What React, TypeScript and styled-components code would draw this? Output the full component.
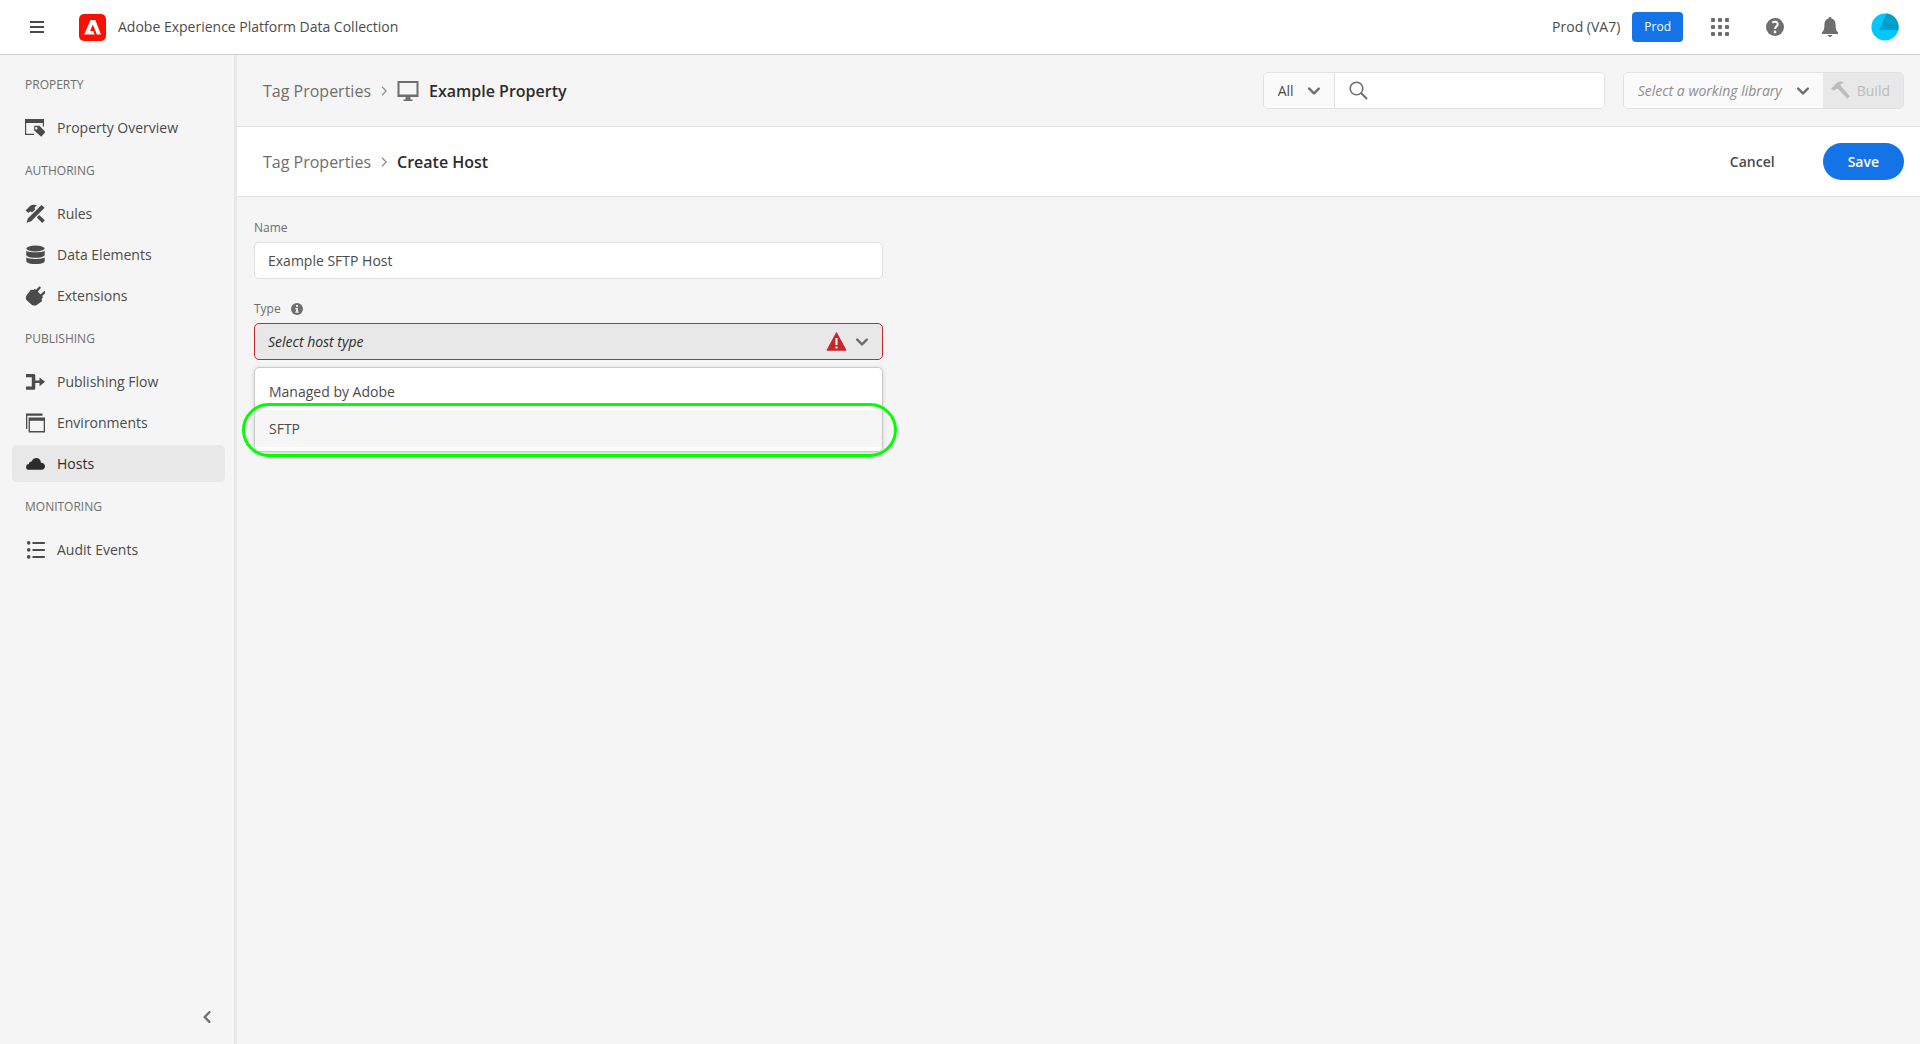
import React from "react";
import styled, { createGlobalStyle } from "styled-components";

const color = {
  page: "#f5f5f5",
  surface: "#ffffff",
  field: "#fafafa",
  line: "#e1e1e1",
  selected: "#e8e8e8",
  text: "#4b4b4b",
  strong: "#2c2c2c",
  muted: "#6e6e6e",
  placeholder: "#8e8e8e",
  disabled: "#bcbcbc",
  accent: "#1473e6",
  error: "#c9252d",
};

const GlobalStyle = createGlobalStyle`
  *, *::before, *::after { box-sizing: border-box; }
  body { margin: 0; background: ${color.page}; }
  body, button, input, select {
    font-family: "Open Sans", "Noto Sans", sans-serif;
    font-size: 14px;
    line-height: 20px;
    color: ${color.text};
  }
  svg { display: block; flex: none; }
`;

/* ---------- Shell ---------- */

const Shell = styled.div`
  display: flex;
  flex-direction: column;
  min-height: 100vh;
`;

const Header = styled.header`
  display: flex;
  align-items: center;
  height: 55px;
  padding: 0 21px 0 23px;
  background: ${color.surface};
  border-bottom: 1px solid #cfcfcf;
`;

const IconButton = styled.button`
  display: flex;
  align-items: center;
  justify-content: center;
  width: 28px;
  height: 28px;
  padding: 0;
  border: 0;
  background: none;
  color: ${color.muted};
  cursor: pointer;
`;

const MenuButton = styled(IconButton)`
  color: ${color.text};
  margin-right: 28px;
`;

const Brand = styled.a`
  display: flex;
  align-items: center;
  gap: 12px;
  color: ${color.text};
  text-decoration: none;
`;

const HeaderTools = styled.div`
  display: flex;
  align-items: center;
  gap: 23px;
  margin-left: auto;
`;

const Sandbox = styled.div`
  display: flex;
  align-items: center;
  gap: 12px;
`;

const IconGroup = styled.div`
  display: flex;
  gap: 27px;
`;

const SandboxButton = styled.button`
  height: 30px;
  padding: 0 12px;
  border: 0;
  border-radius: 4px;
  background: ${color.accent};
  color: #fff;
  font-size: 12px;
  cursor: pointer;
`;

const Body = styled.div`
  display: flex;
  flex: 1;
`;

/* ---------- Side navigation ---------- */

const Sidebar = styled.aside`
  display: flex;
  flex-direction: column;
  justify-content: space-between;
  flex: none;
  width: 237px;
  padding: 5px 9px 13px 12px;
  border-right: 3px solid ${color.selected};
`;

const NavHeading = styled.h2`
  margin: 0;
  padding: 15px 13px 14px;
  font-size: 12px;
  line-height: 20px;
  font-weight: 400;
  color: ${color.muted};
  text-transform: uppercase;
`;

const NavList = styled.ul`
  display: grid;
  gap: 4px;
  margin: 0;
  padding: 0;
  list-style: none;
`;

const NavLink = styled.a<{ $current?: boolean }>`
  display: flex;
  align-items: center;
  gap: 12px;
  height: 37px;
  padding: 0 13px;
  border-radius: 5px;
  background: ${(p) => (p.$current ? color.selected : "transparent")};
  color: ${(p) => (p.$current ? color.strong : color.text)};
  text-decoration: none;
`;

const CollapseButton = styled(IconButton)`
  align-self: flex-end;
  margin-right: 4px;
`;

/* ---------- Main column ---------- */

const Main = styled.main`
  flex: 1;
  min-width: 0;
`;

const Bar = styled.div<{ $white?: boolean }>`
  display: flex;
  align-items: center;
  justify-content: space-between;
  height: ${(p) => (p.$white ? "70px" : "72px")};
  padding: 0 16px 0 26px;
  border-bottom: 1px solid ${color.line};
  background: ${(p) => (p.$white ? color.surface : color.page)};
`;

const Crumbs = styled.nav`
  display: flex;
  align-items: center;
  gap: 10px;
  font-size: 16px;
  line-height: 24px;
  svg { color: ${color.placeholder}; }
`;

const CrumbLink = styled.a`
  color: ${color.muted};
  text-decoration: none;
`;

const CrumbTitle = styled.h1`
  display: flex;
  align-items: center;
  gap: 10px;
  margin: 0;
  font-size: 16px;
  line-height: 24px;
  font-weight: 600;
  color: ${color.strong};
  svg { color: ${color.muted}; }
`;

const Tools = styled.div`
  display: flex;
  align-items: center;
  gap: 18px;
`;

const Joined = styled.div`
  display: flex;
  height: 37px;
  border: 1px solid ${color.line};
  border-radius: 5px;
  overflow: hidden;
`;

const SelectBox = styled.div<{ $divided?: boolean }>`
  display: grid;
  align-items: center;
  background: ${color.field};
  border-right: ${(p) => (p.$divided ? `1px solid ${color.line}` : "0")};
  > * { grid-area: 1 / 1; }
  > svg {
    justify-self: end;
    margin-right: 14px;
    color: ${color.muted};
    pointer-events: none;
  }
`;

const BarSelect = styled.select<{ $empty?: boolean }>`
  appearance: none;
  height: 100%;
  padding: 0 40px 0 14px;
  border: 0;
  background: transparent;
  font-style: ${(p) => (p.$empty ? "italic" : "normal")};
  color: ${(p) => (p.$empty ? color.placeholder : color.text)};
`;

const SearchBox = styled.label`
  display: flex;
  align-items: center;
  gap: 8px;
  width: 269px;
  padding-left: 14px;
  background: ${color.surface};
  color: ${color.muted};
`;

const SearchInput = styled.input`
  flex: 1;
  min-width: 0;
  height: 100%;
  padding: 0 8px 0 0;
  border: 0;
  background: transparent;
  outline: none;
`;

const BuildButton = styled.button`
  display: flex;
  align-items: center;
  gap: 7px;
  padding: 0 13px 0 8px;
  border: 0;
  background: ${color.selected};
  color: ${color.disabled};
`;

const Actions = styled.div`
  display: flex;
  align-items: center;
  gap: 32px;
`;

const ActionButton = styled.button<{ $primary?: boolean }>`
  height: 37px;
  padding: 0 ${(p) => (p.$primary ? "25px" : "16px")};
  border: 0;
  border-radius: 19px;
  background: ${(p) => (p.$primary ? color.accent : "transparent")};
  color: ${(p) => (p.$primary ? "#fff" : color.text)};
  font-weight: 600;
  cursor: pointer;
`;

/* ---------- Form ---------- */

const Form = styled.form`
  display: grid;
  gap: 20px;
  max-width: 646px;
  padding: 21px 0 0 17px;
`;

const Field = styled.div`
  position: relative;
  display: grid;
  gap: 4px;
`;

const LabelRow = styled.div`
  display: flex;
  align-items: center;
  gap: 10px;
  color: ${color.muted};
`;

const Label = styled.label`
  font-size: 12px;
  line-height: 20px;
`;

const TextInput = styled.input`
  width: 100%;
  height: 37px;
  padding: 0 13px;
  border: 1px solid ${color.line};
  border-radius: 5px;
  background: ${color.surface};
`;

const HostSelectBox = styled.div`
  display: grid;
  align-items: center;
  > * { grid-area: 1 / 1; }
`;

const HostSelect = styled.select`
  appearance: none;
  width: 100%;
  height: 37px;
  padding: 0 72px 0 13px;
  border: 1px solid ${color.error};
  border-radius: 5px;
  background: ${color.selected};
  color: ${color.strong};
  font-style: italic;
`;

const SelectMarks = styled.span`
  display: flex;
  align-items: center;
  gap: 9px;
  justify-self: end;
  padding-right: 15px;
  color: ${color.muted};
  pointer-events: none;
`;

const Popover = styled.div`
  position: absolute;
  top: calc(100% + 7px);
  left: 0;
  right: 0;
`;

const Options = styled.ul`
  margin: 0;
  padding: 5px 0 4px;
  list-style: none;
  border: 1px solid #cacaca;
  border-radius: 5px;
  background: ${color.surface};
  box-shadow: 0 1px 4px rgba(0, 0, 0, 0.15);
`;

const Option = styled.li<{ $active?: boolean }>`
  padding: 9px 14px 8px;
  background: ${(p) => (p.$active ? "#f6f6f6" : "transparent")};
`;

const Highlight = styled.div`
  position: absolute;
  left: -12px;
  right: -14px;
  bottom: -5px;
  height: 54px;
  border: 3px solid #00ff00;
  border-radius: 27px;
  pointer-events: none;
`;

/* ---------- Icons ---------- */

const NavIcon = ({ children }: { children: React.ReactNode }) => (
  <svg width="20" height="20" viewBox="0 0 20 20" fill="currentColor" aria-hidden="true">
    {children}
  </svg>
);

const OverviewIcon = () => (
  <NavIcon>
    <path d="M0 1h19v7.500h-1.200V5H1.200v10.800H9V17H0z" />
    <path d="M9.200 7.800h5.200l6 6.200-4.200 4.800-7-6.400zM11.300 9a1.200 1.200 0 1 0 0 2.400 1.200 1.200 0 0 0 0-2.400z" fillRule="evenodd" />
  </NavIcon>
);
const RulesIcon = () => (
  <NavIcon>
    <path d="M16.500.900 19.600 3.800 6.200 17.200 1.600 18.800 3 14.200z" />
    <path d="M.6 6.600 5 1.900C7.300.2 10.200.3 12.400 1.800 10.800 2.200 9.800 2.900 9.500 4l.8 1.300-3.300 3.300L5.300 7.200 3.400 8.900z" />
    <path d="m11.800 13.400 2.400-2.400 5.600 5.300-2.600 2.700z" />
  </NavIcon>
);
const DataIcon = () => (
  <NavIcon>
    <ellipse cx="10.500" cy="3.500" rx="9.200" ry="2.900" />
    <path d="M1.300 5.800c2 2 16.400 2 18.400 0v4.400c-1.200 3.400-17.200 3.400-18.400 0z" />
    <path d="M1.300 12.200c2 2.300 16.400 2.300 18.400 0v4c-1.200 3.800-17.200 3.800-18.400 0z" />
  </NavIcon>
);
const ExtensionsIcon = () => (
  <NavIcon>
    <path d="M5.800 3.800 8.500 4l1.500-1.200 8 8.200-1.200 1.700.1 2.600-4.800 3.400c-1.400 1.100-3.800 1.300-5.400 0L1.700 14.300C.5 12.900.6 10.300 1.800 8.900z" />
    <path d="m11 5.700 3.500-4M15.500 10l3.900-3.700" stroke="currentColor" strokeWidth="2.400" strokeLinecap="round" />
  </NavIcon>
);
const FlowIcon = () => (
  <NavIcon>
    <path d="M1 2h7.800a1.500 1.500 0 0 1 1.500 1.500v5.100h4.200V5.400l5.500 4.400-5.500 4.400v-3.100h-4.200v5.200a1.500 1.500 0 0 1-1.500 1.500H1v-3.300h5.800V5.300H1z" />
  </NavIcon>
);
const EnvironmentsIcon = () => (
  <NavIcon>
    <path d="M1 .500h16.500v2.300H2.300v13.200H1z" />
    <path d="M3.600 4.600H20v14.800H3.600zM4.900 7.700v10.400h13.800V7.700z" fillRule="evenodd" />
  </NavIcon>
);
const HostsIcon = () => (
  <NavIcon>
    <path d="M4 15.800a2.900 2.900 0 0 1-2.900-2.900c0-1.600 1.300-2.700 2.800-2.800 0-1.700 1.300-2.700 2.800-2.500C7.400 5.400 9.100 4 11.200 4c2.700 0 4.700 2 4.700 4.700 2.300-.1 4.100 1.500 4.100 3.600 0 2-1.500 3.500-3.400 3.500z" />
  </NavIcon>
);
const AuditIcon = () => (
  <NavIcon>
    <circle cx="3.700" cy="2.900" r="1.800" />
    <circle cx="3.700" cy="9.900" r="1.800" />
    <circle cx="3.700" cy="16.900" r="1.800" />
    <path d="M7.500 2h12.300v2H7.500zM7.500 9h12.300v2H7.500zM7.500 16h12.300v2H7.500z" />
  </NavIcon>
);

const ChevronDown = () => (
  <svg width="12" height="8" viewBox="0 0 10 6" fill="currentColor" aria-hidden="true">
    <path d="M9.990 1.010A1 1 0 0 0 8.283.303L5 3.586 1.717.303A1 1 0 1 0 .303 1.717l3.990 3.980a1 1 0 0 0 1.414 0l3.990-3.980a.997.997 0 0 0 .293-.707z" />
  </svg>
);
const ChevronLeft = () => (
  <svg width="8" height="12" viewBox="0 0 6 10" fill="currentColor" aria-hidden="true">
    <path d="M4.990 10.010a1 1 0 0 0 .707-1.707L2.414 5.020l3.283-3.283A1 1 0 1 0 4.283.323L.303 4.313a1 1 0 0 0 0 1.414l3.980 3.990a.997.997 0 0 0 .707.293z" />
  </svg>
);
const Separator = () => (
  <svg width="6" height="10" viewBox="0 0 6 10" fill="none" stroke="currentColor" strokeWidth="1.300" aria-hidden="true">
    <path d="m1 .8 4.200 4.200L1 9.200" />
  </svg>
);
const MonitorIcon = () => (
  <svg width="22" height="20" viewBox="0 0 22 20" fill="currentColor" aria-hidden="true">
    <path d="M.5 0h21v16H.5zM2.500 2v11.500h17V2z" fillRule="evenodd" />
    <path d="M8.500 16h5v2.400h2V20h-9v-1.600h2z" />
  </svg>
);
const SearchIcon = () => (
  <svg width="19" height="19" viewBox="0 0 19 19" fill="none" stroke="currentColor" aria-hidden="true">
    <circle cx="7.500" cy="7.500" r="6.300" strokeWidth="1.600" />
    <path d="m12 12 6 6" strokeWidth="2" />
  </svg>
);
const HammerIcon = () => (
  <svg width="19" height="19" viewBox="0 0 19 19" fill="currentColor" aria-hidden="true">
    <path d="M.3 7.400 6.200 1.600C8.400.2 11 .3 13 1.900 11.400 1.900 10 2.600 9.300 4l1 1.600 8.400 9.600-2.100 2.500-9-9.300L5.900 7.400 2.800 9.800z" />
  </svg>
);
const InfoIcon = () => (
  <svg width="12" height="12" viewBox="0 0 12 12" aria-hidden="true">
    <circle cx="6" cy="6" r="6" fill="currentColor" />
    <path d="M5 2h2v1.700H5zM4.300 5h2.600v3.600h.8v1.200H4.300V8.600h.8V6.200h-.8z" fill="#f4f4f4" />
  </svg>
);
const AlertIcon = () => (
  <svg width="21" height="19" viewBox="0 0 21 19" aria-hidden="true">
    <path d="M10.060.600.600 18a.5.500 0 0 0 .440.740h18.920a.5.500 0 0 0 .440-.740L10.940.600a.5.500 0 0 0-.880 0z" fill="#c9252d" />
    <path d="M9.500 6h2v7h-2zM9.500 14.500h2v2h-2z" fill="#fff" />
  </svg>
);
const HamburgerIcon = () => (
  <svg width="14" height="12" viewBox="0 0 14 12" fill="currentColor" aria-hidden="true">
    <path d="M0 0h14v2H0zM0 5h14v2H0zM0 10h14v2H0z" />
  </svg>
);
const AdobeLogo = () => (
  <svg width="27" height="27" viewBox="0 0 27 27" aria-hidden="true">
    <rect width="27" height="27" rx="5" fill="#fa0f00" />
    <path d="M15.600 20.500 14.300 17h-3.200l2.700-6.400 4.100 9.900h4L16.400 6h-4.900L5.200 20.500z" fill="#fff" />
  </svg>
);
const AppsIcon = () => (
  <svg width="18" height="18" viewBox="0 0 18 18" fill="currentColor" aria-hidden="true">
    {[0, 7, 14].flatMap((y) => [0, 7, 14].map((x) => <rect key={`${x}-${y}`} x={x} y={y} width="4" height="4" rx="1" />))}
  </svg>
);
const HelpIcon = () => (
  <svg width="18" height="18" viewBox="0 0 18 18" aria-hidden="true">
    <circle cx="9" cy="9" r="9" fill="currentColor" />
    <path d="M6.300 4.800C8.300 3 11.700 3.500 11.700 6.300c0 2.200-2.600 2.400-2.600 4.600" fill="none" stroke="#fff" strokeWidth="2" />
    <circle cx="9" cy="14" r="1.400" fill="#fff" />
  </svg>
);
const BellIcon = () => (
  <svg width="18" height="20" viewBox="0 0 18 20" fill="currentColor" aria-hidden="true">
    <path d="M9 0a1.500 1.500 0 0 1 1.500 1.600C13.400 2.300 14.600 4.700 14.600 8c0 4 .5 5.700 2.400 7.200V17H1v-1.800C2.900 13.700 3.400 12 3.400 8c0-3.300 1.200-5.700 4.100-6.400A1.500 1.500 0 0 1 9 0zM6.600 18h4.800c-.3 1.100-1.200 1.900-2.400 1.900S6.900 19.100 6.600 18z" />
  </svg>
);
const Avatar = () => (
  <svg width="28" height="28" viewBox="0 0 28 28" aria-hidden="true">
    <circle cx="14" cy="14" r="13.600" fill="#00c8ff" />
    <path d="M15.300.500A13.600 13.600 0 0 1 27 18l-2-1H8.500z" fill="#009fcb" />
  </svg>
);

/* ---------- Page ---------- */

const sections = [
  { title: "Property", items: [{ name: "Property Overview", Icon: OverviewIcon }] },
  {
    title: "Authoring",
    items: [
      { name: "Rules", Icon: RulesIcon },
      { name: "Data Elements", Icon: DataIcon },
      { name: "Extensions", Icon: ExtensionsIcon },
    ],
  },
  {
    title: "Publishing",
    items: [
      { name: "Publishing Flow", Icon: FlowIcon },
      { name: "Environments", Icon: EnvironmentsIcon },
      { name: "Hosts", Icon: HostsIcon },
    ],
  },
  { title: "Monitoring", items: [{ name: "Audit Events", Icon: AuditIcon }] },
];

export default function App() {
  const current = "Hosts";
  const [name, setName] = React.useState("Example SFTP Host");

  return (
    <Shell>
      <GlobalStyle />
      <Header>
        <MenuButton aria-label="Menu"><HamburgerIcon /></MenuButton>
        <Brand href="#"><AdobeLogo />Adobe Experience Platform Data Collection</Brand>
        <HeaderTools>
          <Sandbox>
            <span>Prod (VA7)</span>
            <SandboxButton>Prod</SandboxButton>
          </Sandbox>
          <IconGroup>
            <IconButton aria-label="Apps"><AppsIcon /></IconButton>
            <IconButton aria-label="Help"><HelpIcon /></IconButton>
            <IconButton aria-label="Notifications"><BellIcon /></IconButton>
            <IconButton aria-label="Account"><Avatar /></IconButton>
          </IconGroup>
        </HeaderTools>
      </Header>

      <Body>
        <Sidebar>
          <nav aria-label="Property">
            {sections.map((section) => (
              <section key={section.title}>
                <NavHeading>{section.title}</NavHeading>
                <NavList>
                  {section.items.map(({ name: item, Icon }) => (
                    <li key={item}>
                      <NavLink href="#" $current={item === current} aria-current={item === current ? "page" : undefined}>
                        <Icon />
                        {item}
                      </NavLink>
                    </li>
                  ))}
                </NavList>
              </section>
            ))}
          </nav>
          <CollapseButton aria-label="Collapse navigation"><ChevronLeft /></CollapseButton>
        </Sidebar>

        <Main>
          <Bar>
            <Crumbs aria-label="Property breadcrumb">
              <CrumbLink href="#">Tag Properties</CrumbLink>
              <Separator />
              <CrumbTitle><MonitorIcon />Example Property</CrumbTitle>
            </Crumbs>
            <Tools>
              <Joined>
                <SelectBox $divided>
                  <BarSelect aria-label="Search scope" defaultValue="All">
                    <option>All</option>
                  </BarSelect>
                  <ChevronDown />
                </SelectBox>
                <SearchBox>
                  <SearchIcon />
                  <SearchInput type="text" aria-label="Search" />
                </SearchBox>
              </Joined>
              <Joined>
                <SelectBox>
                  <BarSelect $empty aria-label="Working library">
                    <option>Select a working library</option>
                  </BarSelect>
                  <ChevronDown />
                </SelectBox>
                <BuildButton disabled><HammerIcon />Build</BuildButton>
              </Joined>
            </Tools>
          </Bar>

          <Bar $white>
            <Crumbs aria-label="Page breadcrumb">
              <CrumbLink href="#">Tag Properties</CrumbLink>
              <Separator />
              <CrumbTitle>Create Host</CrumbTitle>
            </Crumbs>
            <Actions>
              <ActionButton type="button">Cancel</ActionButton>
              <ActionButton type="submit" form="host-form" $primary>Save</ActionButton>
            </Actions>
          </Bar>

          <Form id="host-form" onSubmit={(e) => e.preventDefault()}>
            <Field>
              <LabelRow><Label htmlFor="host-name">Name</Label></LabelRow>
              <TextInput id="host-name" type="text" value={name} onChange={(e) => setName(e.target.value)} />
            </Field>
            <Field>
              <LabelRow>
                <Label htmlFor="host-type">Type</Label>
                <InfoIcon />
              </LabelRow>
              <HostSelectBox>
                <HostSelect id="host-type" aria-invalid="true">
                  <option>Select host type</option>
                </HostSelect>
                <SelectMarks><AlertIcon /><ChevronDown /></SelectMarks>
              </HostSelectBox>
              <Popover>
                <Options role="listbox" aria-label="Type">
                  <Option role="option">Managed by Adobe</Option>
                  <Option role="option" $active>SFTP</Option>
                </Options>
                <Highlight />
              </Popover>
            </Field>
          </Form>
        </Main>
      </Body>
    </Shell>
  );
}
